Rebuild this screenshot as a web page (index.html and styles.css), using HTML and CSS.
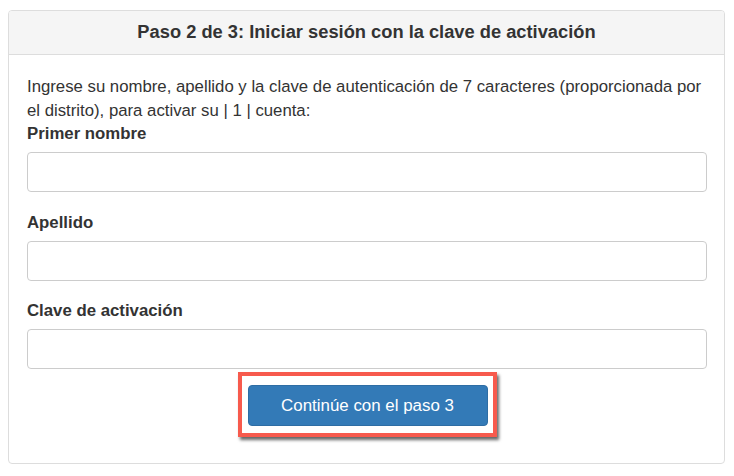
FILE: index.html
```html
<!DOCTYPE html>
<html lang="es">
<head>
<meta charset="utf-8">
<title>Paso 2 de 3</title>
<link rel="stylesheet" href="styles.css">
</head>
<body>
<div class="panel">
  <div class="panel-heading">Paso 2 de 3: Iniciar sesión con la clave de activación</div>
  <div class="panel-body">
    <p class="intro">Ingrese su nombre, apellido y la clave de autenticación de 7 caracteres (proporcionada por el distrito), para activar su | 1 | cuenta:</p>
    <div class="form-group">
      <label class="label" for="fn">Primer nombre</label>
      <input class="input" id="fn" type="text">
    </div>
    <div class="form-group">
      <label class="label" for="ln">Apellido</label>
      <input class="input" id="ln" type="text">
    </div>
    <div class="form-group last">
      <label class="label" for="key">Clave de activación</label>
      <input class="input" id="key" type="text">
    </div>
    <div class="actions">
      <div class="highlight">
        <button class="btn" type="button">Continúe con el paso 3</button>
      </div>
    </div>
  </div>
</div>
</body>
</html>
```
FILE: styles.css
```css
html, body {
  margin: 0;
  background: #ffffff;
}
body {
  padding: 10px 9px 0 8px;
  font-family: "Liberation Sans", Arial, Helvetica, sans-serif;
  color: #333333;
}
.panel {
  width: 717px;
  height: 454px;
  box-sizing: border-box;
  border: 1px solid #dddddd;
  border-radius: 4px;
  overflow: hidden;
}
.panel-heading {
  height: 44px;
  box-sizing: border-box;
  background: #f5f5f5;
  border-bottom: 1px solid #dddddd;
  display: flex;
  align-items: center;
  justify-content: center;
  font-weight: bold;
  font-size: 18.3px;
  padding-bottom: 1px;
}
.panel-body {
  padding: 20px 17px 0 18px;
}
.intro {
  margin: 0;
  font-size: 16.75px;
  line-height: 23.5px;
}
.form-group {
  display: flex;
  flex-direction: column;
  margin-bottom: 18.5px;
}
.form-group.last {
  margin-bottom: 0;
}
.label {
  font-weight: bold;
  font-size: 16.8px;
  line-height: 23.5px;
  margin-bottom: 6.5px;
}
.input {
  height: 40px;
  box-sizing: border-box;
  border: 1px solid #cccccc;
  border-radius: 4px;
  margin: 0;
  padding: 6px 12px;
  font: inherit;
  background: #ffffff;
}
.actions {
  display: flex;
  justify-content: center;
  padding-top: 3px;
}
.highlight {
  border: 4.5px solid #f75a4d;
  padding: 9px 5px 7px 6px;
  background: #ffffff;
  box-shadow: 2px 3px 3px rgba(0, 0, 0, 0.6);
}
.btn {
  display: block;
  width: 240px;
  height: 41px;
  box-sizing: border-box;
  background: #337ab7;
  border: 1px solid #2e6da4;
  border-radius: 4px;
  color: #ffffff;
  font-family: "Liberation Sans", Arial, Helvetica, sans-serif;
  font-size: 16.9px;
  padding: 0;
}
```
